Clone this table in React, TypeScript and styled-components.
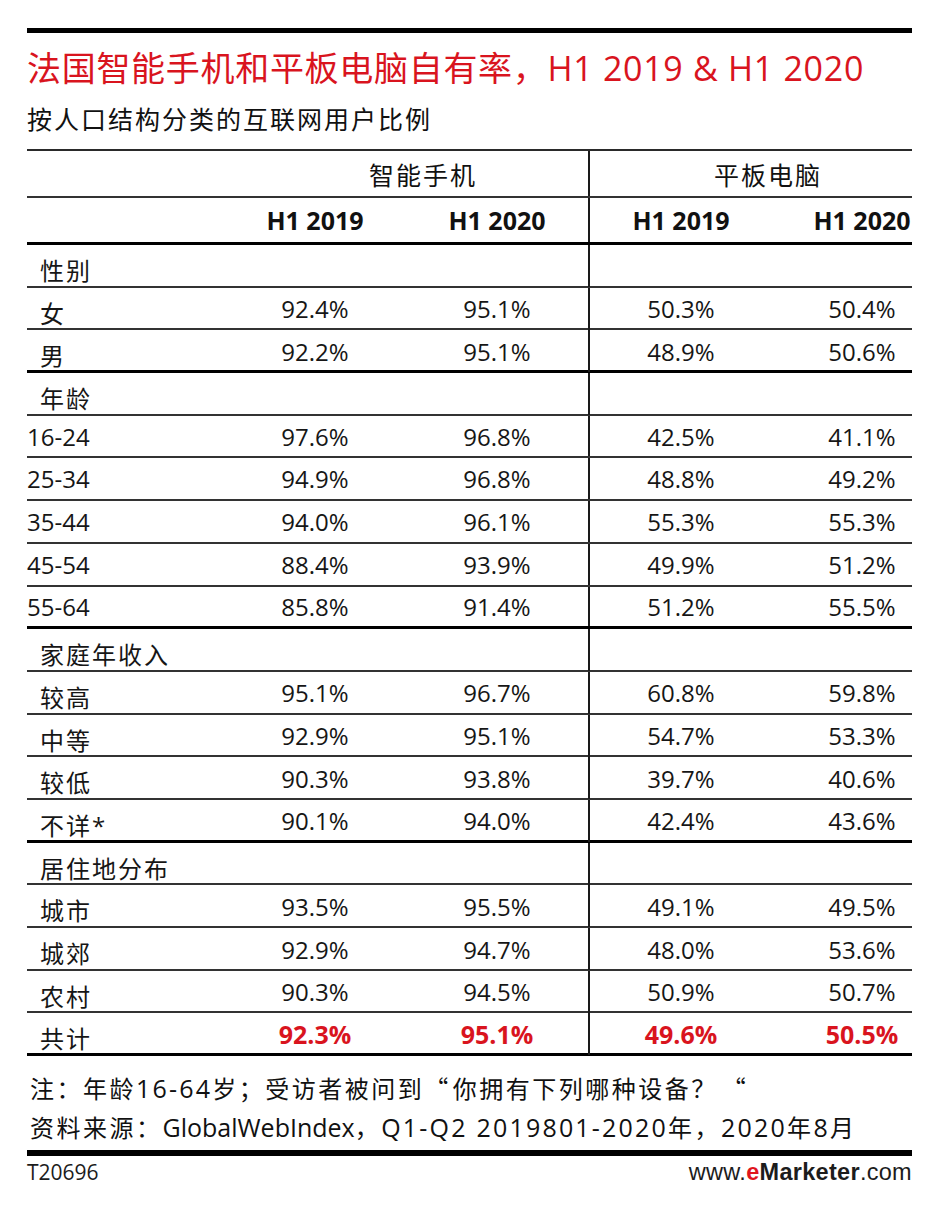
import React from "react";
import styled, { createGlobalStyle, css } from "styled-components";

const GlobalStyle = createGlobalStyle`
  html, body { margin: 0; padding: 0; background: #fff; }
  body {
    font-family: "Open Sans", "Noto Sans CJK SC", sans-serif;
    color: #161616;
  }
`;

const COLS = "197px 182px 182px 184px 140px";
const RED = "#d9141e";

const Page = styled.div`
  width: 885px;
  padding: 28px 0 0 27px;
`;

const Rule = styled.div<{ $h: number; $gap?: number }>`
  height: ${(p) => p.$h}px;
  margin-top: ${(p) => p.$gap ?? 0}px;
  background: #000;
`;

const Title = styled.h1`
  margin: 0;
  height: 66px;
  display: flex;
  align-items: center;
  font-size: 34px;
  font-weight: 400;
  color: ${RED};
  letter-spacing: 0.7px;
  white-space: nowrap;
`;

const Subtitle = styled.h2`
  margin: 0;
  height: 38px;
  display: flex;
  align-items: center;
  font-size: 25px;
  font-weight: 400;
  letter-spacing: 2px;
  color: #111;
`;

const Table = styled.div`
  margin-top: 12px;
  border-top: 2px solid #2a2a2a;
`;

const Row = styled.div<{ $h: number; $line: "thin" | "thick" }>`
  display: grid;
  grid-template-columns: ${COLS};
  height: ${(p) => p.$h}px;
  box-sizing: border-box;
  border-bottom: ${(p) => (p.$line === "thick" ? "3px solid #000" : "2px solid #333")};
`;

const Cell = styled.div<{ $divider?: boolean; $last?: boolean }>`
  display: flex;
  align-items: center;
  justify-content: center;
  box-sizing: border-box;
  ${(p) => p.$divider && css`border-left: 2px solid #1a1a1a;`}
  ${(p) => p.$last && css`padding-left: 40px;`}
`;

const GroupHead = styled(Cell)<{ $span: string }>`
  grid-column: ${(p) => p.$span};
  padding-left: 34px;
  font-size: 25px;
  letter-spacing: 2px;
  color: #111;
`;

const YearHead = styled(Cell)`
  font-size: 25px;
  font-weight: 700;
  color: #111;
`;

const Label = styled.div<{ $indent: boolean; $cjk: boolean }>`
  display: flex;
  align-items: center;
  box-sizing: border-box;
  padding-left: ${(p) => (p.$indent ? 13 : 0)}px;
  padding-top: ${(p) => (p.$cjk ? 7 : 0)}px;
  font-size: 24px;
  letter-spacing: ${(p) => (p.$cjk ? 2 : 0)}px;
  white-space: nowrap;
`;

const Value = styled(Cell)<{ $total?: boolean }>`
  font-size: ${(p) => (p.$total ? 25 : 24)}px;
  font-weight: ${(p) => (p.$total ? 700 : 400)};
  color: ${(p) => (p.$total ? RED : "#161616")};
`;

const Notes = styled.div`
  margin-top: 11px;
`;

const NoteLine = styled.p`
  margin: 0;
  height: 39px;
  display: flex;
  align-items: center;
  padding-left: 3px;
  padding-top: 2px;
  box-sizing: border-box;
  font-size: 24px;
  letter-spacing: 2.5px;
  white-space: pre;
  color: #111;
`;

const Word = styled.span`
  font-size: 25px;
  letter-spacing: 0;
`;

const Digits = styled.span`
  font-size: 25px;
  letter-spacing: 2.2px;
`;

const Quote = styled.span<{ $gap: number }>`
  font-family: "Noto Sans CJK SC", sans-serif;
  padding-left: ${(p) => p.$gap}px;
  padding-right: 2px;
`;

const Footer = styled.div`
  height: 32px;
  display: flex;
  align-items: center;
  justify-content: space-between;
`;

const Code = styled.span`
  font-size: 21px;
  color: #1c1c1c;
`;

const Brand = styled.span`
  font-family: "Liberation Sans", Arial, sans-serif;
  font-size: 23.5px;
  color: #1c1c1c;
  letter-spacing: 0.3px;
`;

const BrandBold = styled.b<{ $red?: boolean }>`
  font-weight: 700;
  color: ${(p) => (p.$red ? "#e0141e" : "#1c1c1c")};
`;

type DataRow = { label: string; v: [string, string, string, string] };
type Section = { head: string; cjk: boolean; rows: DataRow[] };

const sections: Section[] = [
  {
    head: "性别",
    cjk: true,
    rows: [
      { label: "女", v: ["92.4%", "95.1%", "50.3%", "50.4%"] },
      { label: "男", v: ["92.2%", "95.1%", "48.9%", "50.6%"] },
    ],
  },
  {
    head: "年龄",
    cjk: false,
    rows: [
      { label: "16-24", v: ["97.6%", "96.8%", "42.5%", "41.1%"] },
      { label: "25-34", v: ["94.9%", "96.8%", "48.8%", "49.2%"] },
      { label: "35-44", v: ["94.0%", "96.1%", "55.3%", "55.3%"] },
      { label: "45-54", v: ["88.4%", "93.9%", "49.9%", "51.2%"] },
      { label: "55-64", v: ["85.8%", "91.4%", "51.2%", "55.5%"] },
    ],
  },
  {
    head: "家庭年收入",
    cjk: true,
    rows: [
      { label: "较高", v: ["95.1%", "96.7%", "60.8%", "59.8%"] },
      { label: "中等", v: ["92.9%", "95.1%", "54.7%", "53.3%"] },
      { label: "较低", v: ["90.3%", "93.8%", "39.7%", "40.6%"] },
      { label: "不详*", v: ["90.1%", "94.0%", "42.4%", "43.6%"] },
    ],
  },
  {
    head: "居住地分布",
    cjk: true,
    rows: [
      { label: "城市", v: ["93.5%", "95.5%", "49.1%", "49.5%"] },
      { label: "城郊", v: ["92.9%", "94.7%", "48.0%", "53.6%"] },
      { label: "农村", v: ["90.3%", "94.5%", "50.9%", "50.7%"] },
    ],
  },
];

const ROW_H = 42.7;

function Values({ v, total }: { v: string[]; total?: boolean }) {
  return (
    <>
      <Value $total={total}>{v[0]}</Value>
      <Value $total={total}>{v[1]}</Value>
      <Value $total={total} $divider>{v[2]}</Value>
      <Value $total={total} $last>{v[3]}</Value>
    </>
  );
}

export default function App() {
  return (
    <>
      <GlobalStyle />
      <Page>
        <Rule $h={5} />
        <Title>法国智能手机和平板电脑自有率，H1 2019 &amp; H1 2020</Title>
        <Subtitle>按人口结构分类的互联网用户比例</Subtitle>
        <Table>
          <Row $h={47} $line="thin">
            <Cell />
            <GroupHead $span="2 / 4">智能手机</GroupHead>
            <GroupHead $span="4 / 6" $divider>平板电脑</GroupHead>
          </Row>
          <Row $h={47} $line="thick">
            <Cell />
            <YearHead>H1 2019</YearHead>
            <YearHead>H1 2020</YearHead>
            <YearHead $divider>H1 2019</YearHead>
            <YearHead $last>H1 2020</YearHead>
          </Row>
          {sections.map((s, si) => (
            <React.Fragment key={s.head}>
              <Row $h={ROW_H} $line="thin">
                <Label $indent $cjk>{s.head}</Label>
                <Cell />
                <Cell />
                <Cell $divider />
                <Cell $last />
              </Row>
              {s.rows.map((r, ri) => {
                const lastInSection = ri === s.rows.length - 1;
                const thick = lastInSection && si < sections.length - 1;
                return (
                  <Row key={r.label} $h={ROW_H} $line={thick ? "thick" : "thin"}>
                    <Label $indent={s.cjk} $cjk={s.cjk}>{r.label}</Label>
                    <Values v={r.v} />
                  </Row>
                );
              })}
            </React.Fragment>
          ))}
          <Row $h={ROW_H} $line="thick">
            <Label $indent $cjk>共计</Label>
            <Values v={["92.3%", "95.1%", "49.6%", "50.5%"]} total />
          </Row>
        </Table>
        <Notes>
          <NoteLine>
            注：年龄<Digits>16-64</Digits>岁；受访者被问到<Quote $gap={0}>“</Quote>你拥有下列哪种设备？<Quote $gap={4}>“</Quote>
          </NoteLine>
          <NoteLine>
            资料来源：<Word>GlobalWebIndex</Word>，<Digits>Q1-Q2 2019801-2020</Digits>年，<Digits>2020</Digits>年<Digits>8</Digits>月
          </NoteLine>
        </Notes>
        <Rule $h={6} $gap={5} />
        <Footer>
          <Code>T20696</Code>
          <Brand>
            www.<BrandBold $red>e</BrandBold>
            <BrandBold>Marketer</BrandBold>.com
          </Brand>
        </Footer>
      </Page>
    </>
  );
}
